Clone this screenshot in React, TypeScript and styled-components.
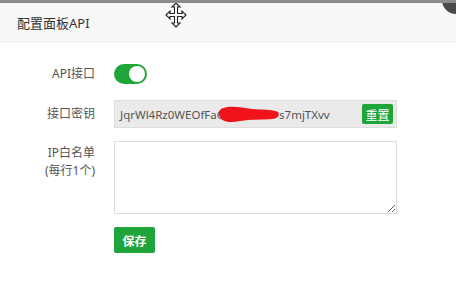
import styled, { createGlobalStyle } from "styled-components";

const Global = createGlobalStyle`
  html, body {
    margin: 0;
    padding: 0;
    background: #fff;
    overflow: hidden;
  }
  body {
    font-family: "Noto Sans", "Noto Sans CJK SC", sans-serif;
  }
`;

const Page = styled.div`
  position: relative;
  width: 456px;
  height: 282px;
  overflow: hidden;
  border-top: 3px solid #8c8c8c;
  box-sizing: border-box;
`;

const Header = styled.div`
  height: 38px;
  display: flex;
  align-items: center;
  padding-left: 17px;
  background: #f8f8f8;
  border-bottom: 1px solid #eee;
  font-size: 13px;
  color: #333;
`;

const CloseBtn = styled.div`
  position: absolute;
  right: -14px;
  top: -17px;
  width: 28px;
  height: 28px;
  border-radius: 50%;
  background: #4a4a4a;
`;

const MoveCursor = styled.svg`
  position: absolute;
  left: 165px;
  top: -1px;
`;

const Form = styled.div`
  display: flex;
  flex-direction: column;
  gap: 13px;
  padding-top: 22px;
`;

const Row = styled.div<{ $align?: string }>`
  display: flex;
  align-items: ${(p) => p.$align || "center"};
`;

const Label = styled.div`
  width: 95px;
  margin-right: 19px;
  text-align: right;
  font-size: 12px;
  line-height: 18px;
  color: #555;
`;

const Toggle = styled.div<{ $on: boolean }>`
  width: 33px;
  height: 20px;
  border-radius: 10px;
  background: ${(p) => (p.$on ? "#20a53a" : "#ccc")};
  display: flex;
  align-items: center;
  justify-content: ${(p) => (p.$on ? "flex-end" : "flex-start")};
  padding: 0 2px;
  box-sizing: border-box;
  &::after {
    content: "";
    width: 16px;
    height: 16px;
    border-radius: 50%;
    background: #fff;
  }
`;

const KeyBox = styled.div`
  width: 283px;
  height: 28px;
  box-sizing: border-box;
  border: 1px solid #ddd;
  background: #eaeaea;
  display: flex;
  align-items: center;
  justify-content: space-between;
  padding: 0 3px 0 5px;
  font-size: 11.5px;
  color: #555;
`;

const KeyText = styled.span`
  display: flex;
  align-items: center;
  white-space: nowrap;
`;

const Blob = styled.svg`
  margin: 0 -1px 0 -6px;
`;

const GreenBtn = styled.button<{ $bold?: boolean }>`
  border: none;
  border-radius: 2px;
  background: #20a53a;
  color: #fff;
  font-family: "Noto Sans CJK SC", sans-serif;
  font-weight: ${(p) => (p.$bold ? 700 : 400)};
  padding: 0;
`;

const ResetBtn = styled(GreenBtn)`
  width: 31px;
  height: 20px;
  font-size: 12px;
`;

const SaveBtn = styled(GreenBtn)`
  width: 41px;
  height: 26px;
  font-size: 12px;
`;

const Area = styled.textarea`
  width: 283px;
  height: 73px;
  box-sizing: border-box;
  border: 1px solid #ddd;
  resize: both;
  margin: 0;
  outline: none;
`;

const Note = styled.div`
  margin-top: 26px;
  padding-left: 22px;
  font-size: 12px;
  color: #bbb;
  white-space: nowrap;
`;

export default function App() {
  return (
    <>
      <Global />
      <Page>
        <Header>配置面板API</Header>
        <MoveCursor width="22" height="26" viewBox="0 0 22 26">
          <path
            d="M11 1 L15 5 L12.5 5 L12.5 11.5 L17 11.5 L17 9 L21 13 L17 17 L17 14.5 L12.5 14.5 L12.5 21 L15 21 L11 25 L7 21 L9.5 21 L9.5 14.5 L5 14.5 L5 17 L1 13 L5 9 L5 11.5 L9.5 11.5 L9.5 5 L7 5 Z"
            fill="#fff"
            stroke="#222"
            strokeWidth="1.1"
          />
        </MoveCursor>
        <CloseBtn />
        <Form>
          <Row>
            <Label>API接口</Label>
            <Toggle $on />
          </Row>
          <Row style={{ marginTop: 3 }}>
            <Label>接口密钥</Label>
            <KeyBox>
              <KeyText>
                JqrWl4Rz0WEOfFaC
                <Blob width="62" height="18" viewBox="0 0 62 18">
                  <path
                    d="M3 4 C10 0 22 2 34 4 C44 5 54 4 60 7 C62 10 60 14 54 14 C44 15 34 14 22 16 C12 18 4 17 2 12 C0 9 1 6 3 4 Z"
                    fill="#f0141a"
                  />
                </Blob>
                s7mjTXvv
              </KeyText>
              <ResetBtn>重置</ResetBtn>
            </KeyBox>
          </Row>
          <Row $align="flex-start">
            <Label style={{ marginTop: 3 }}>
              IP白名单
              <br />
              (每行1个)
            </Label>
            <Area />
          </Row>
          <Row>
            <Label />
            <SaveBtn $bold>保存</SaveBtn>
          </Row>
        </Form>
        <Note>· 开启API后，必须在IP白名单列表中的IP才能访问面板API接口，请不要在生产环境开启</Note>
      </Page>
    </>
  );
}
